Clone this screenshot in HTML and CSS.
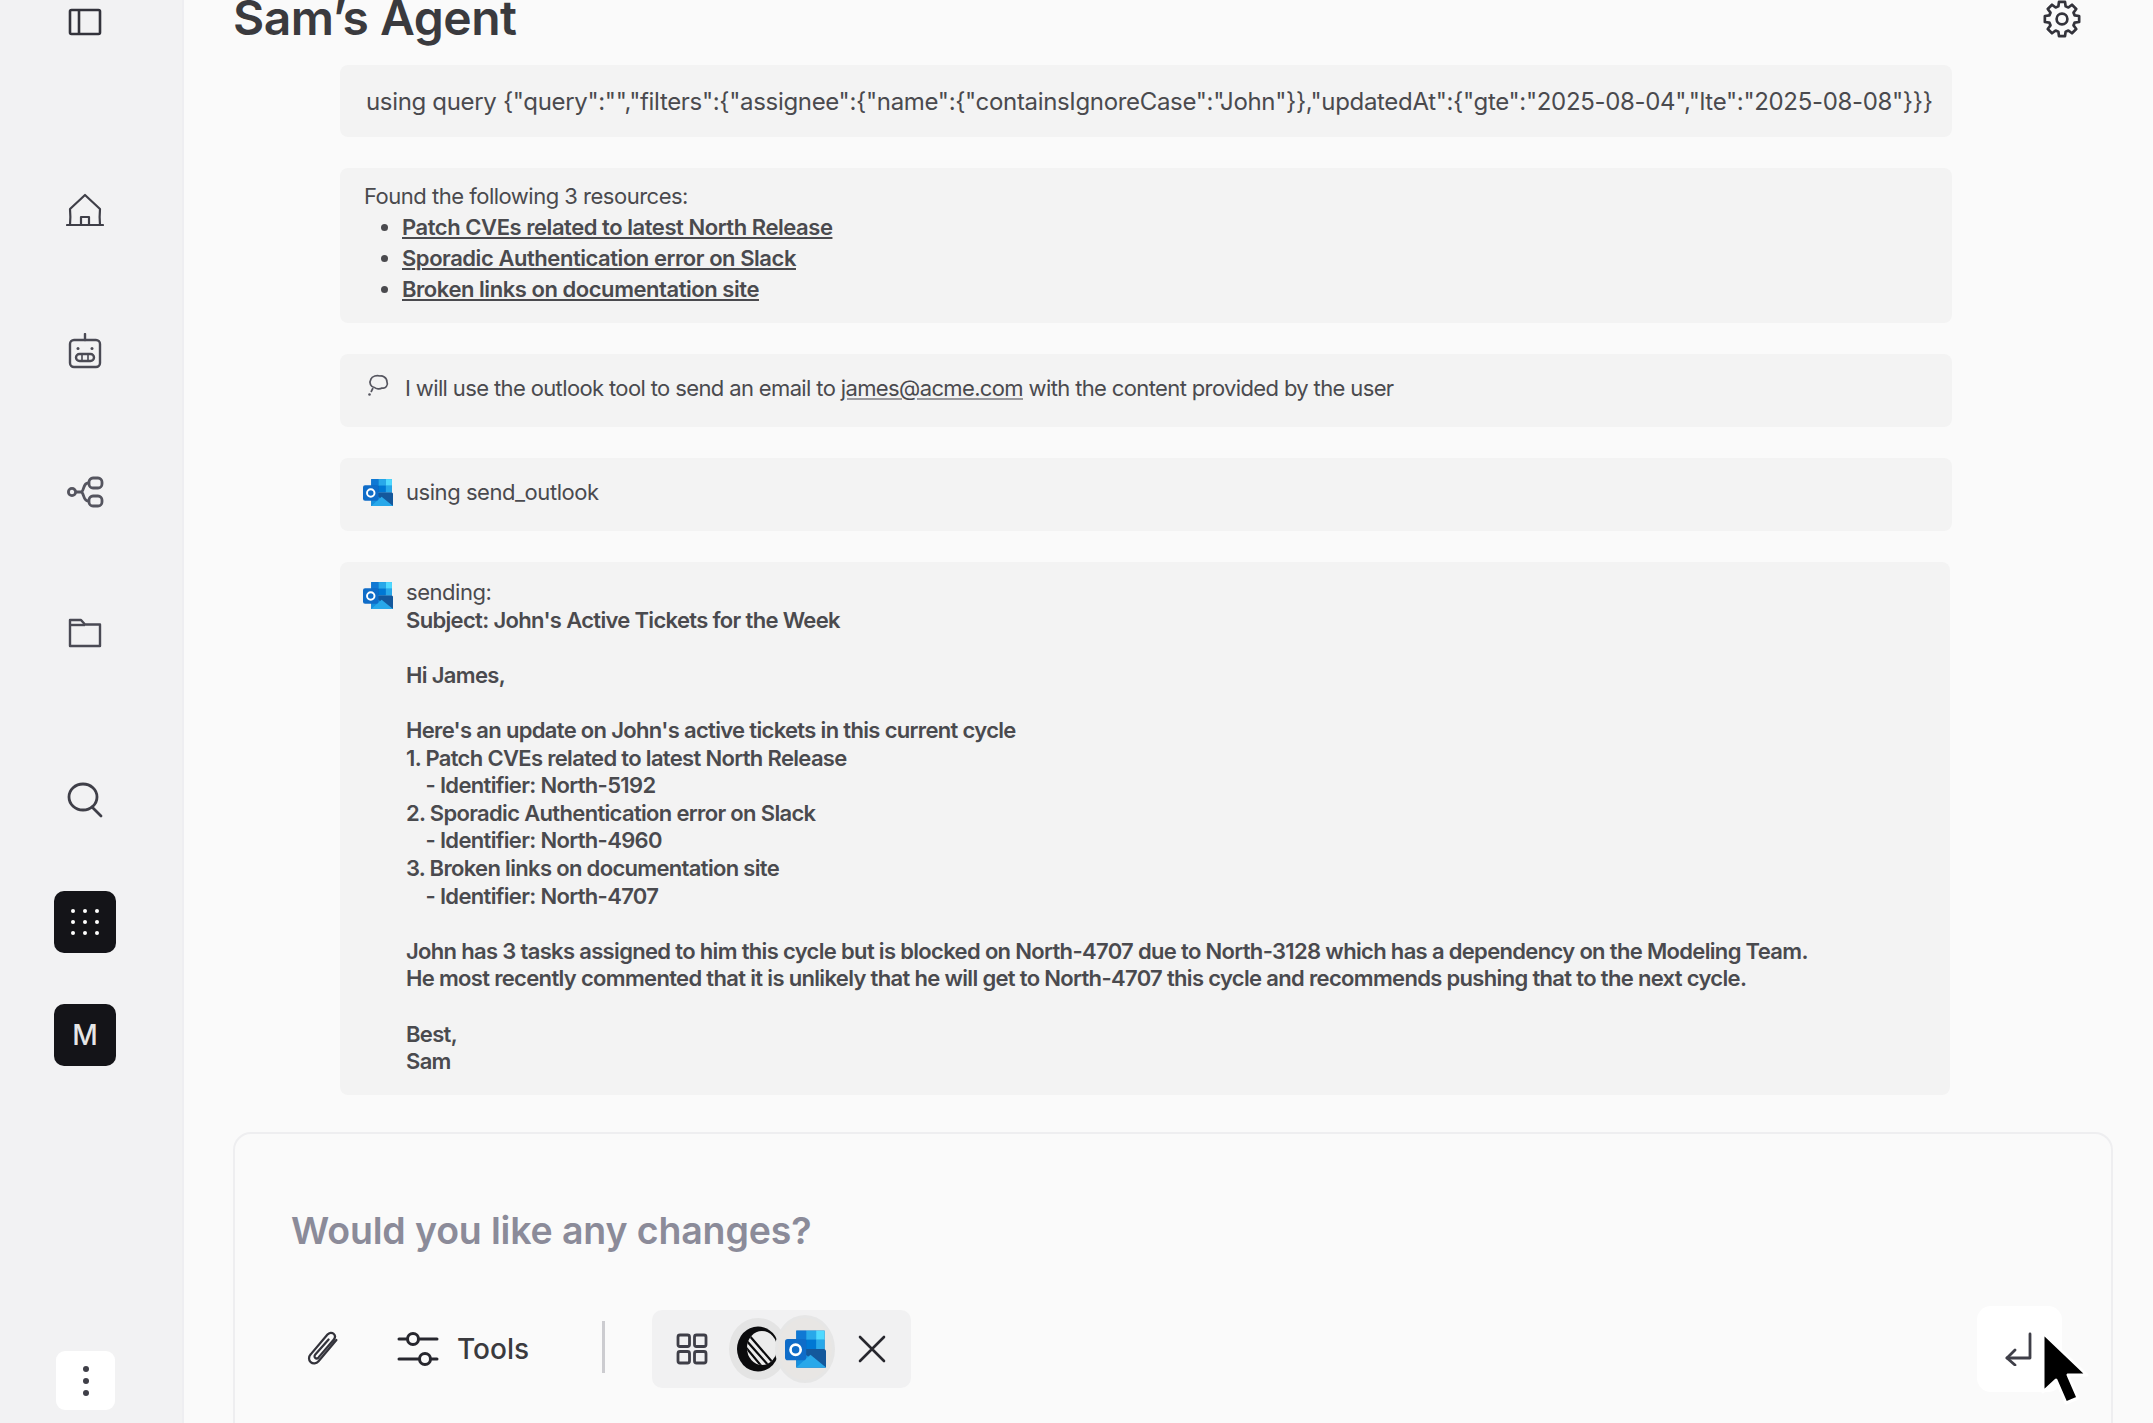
FILE: index.html
```html
<!DOCTYPE html>
<html>
  <head>
    <title>Sam's Agent</title>
    <meta name="viewport" content="width=device-width, initial-scale=1" />
    <link rel="stylesheet" href="styles.css">
  </head>

  <body>
    <svg class="sprites" width="0" height="0">
      <symbol id="outlook" viewBox="0 0 29 28">
        <path fill="#0364b8" d="M8 1h20v13H8z"/>
        <path fill="#0f78d4" d="M8 1h7v6.500H8z"/>
        <path fill="#28a8ea" d="M15 1h7v6.500h-7z"/>
        <path fill="#50d9ff" d="M22 1h6v6.500h-6z"/>
        <path fill="#0078d4" d="M15 7.500h7V14h-7z"/>
        <path fill="#28a8ea" d="M22 7.500h6V14h-6z"/>
        <path fill="#14589c" d="M8 14h20l1 1v12H8z"/>
        <path fill="#1490df" d="M8 14l21 13H8z"/>
        <path fill="#28a8ea" d="M8 27l10-9 11 9z"/>
        <rect fill="#0f6cc8" x="0" y="7" width="15" height="15" rx="2"/>
        <circle cx="7.500" cy="14.500" r="3.600" fill="none" stroke="#fff" stroke-width="1.900"/>
      </symbol>
    </svg>

    <div class="app">
      <aside class="sidebar">
        <a class="side-icon panel-toggle">
          <svg width="34" height="28" viewBox="0 0 34 28" fill="none" stroke="#33333b" stroke-width="2.600" stroke-linejoin="round"><rect x="2" y="2" width="30" height="24" rx="1.500"/><path d="M11 2v24"/></svg>
        </a>

        <nav class="side-nav">
          <a class="side-icon">
            <svg width="38" height="34" viewBox="0 0 38 34" fill="none" stroke="#3f3f48" stroke-width="2.200" stroke-linejoin="round" stroke-linecap="round"><path d="M1 32h36"/><path d="M4 32c.5-6 .5-11 0-16L19 2l15 14c-.5 5-.5 10 0 16"/><path d="M15 32v-8h8v8"/></svg>
          </a>
          <a class="side-icon">
            <svg width="34" height="36" viewBox="0 0 34 36" fill="none" stroke="#4a4a54" stroke-width="2.400" stroke-linecap="round"><path d="M17 1v6"/><rect x="2" y="7" width="30" height="27" rx="4"/><rect x="8" y="21" width="18" height="7" rx="3.500"/><path d="M14 21v7M20 21v7" stroke-width="1.600"/><circle cx="10" cy="15.500" r="1.500" fill="#4a4a54" stroke="none"/><circle cx="24" cy="15.500" r="1.500" fill="#4a4a54" stroke="none"/></svg>
          </a>
          <a class="side-icon">
            <svg width="37" height="32" viewBox="0 0 37 32" fill="none" stroke="#55555f" stroke-width="2.800"><circle cx="5" cy="16" r="3.600"/><path d="M9 16h5M14 16c3 0 2-9 7-9M14 16c3 0 2 9 7 9"/><rect x="22" y="2" width="13" height="10" rx="4"/><rect x="22" y="20" width="13" height="10" rx="4"/></svg>
          </a>
          <a class="side-icon">
            <svg width="34" height="30" viewBox="0 0 34 30" fill="none" stroke="#4a4a54" stroke-width="2.400" stroke-linejoin="round"><path d="M2 27V2h11l4 4.500h15V28H2z"/><path d="M2 7h15"/></svg>
          </a>
        </nav>

        <a class="side-icon search-link">
          <svg width="36" height="36" viewBox="0 0 36 36" fill="none" stroke="#3f3f48" stroke-width="2.800" stroke-linecap="round"><ellipse cx="16" cy="15" rx="14" ry="13"/><path d="M25 25l9 9"/></svg>
        </a>

        <a class="dark-btn apps-btn">
          <svg width="32" height="28" viewBox="0 0 32 28" fill="#fff"><circle cx="4" cy="3" r="2"/><circle cx="16" cy="3" r="2"/><circle cx="28" cy="3" r="2"/><circle cx="4" cy="14" r="2"/><circle cx="16" cy="14" r="2"/><circle cx="28" cy="14" r="2"/><circle cx="4" cy="25" r="2"/><circle cx="16" cy="25" r="2"/><circle cx="28" cy="25" r="2"/></svg>
        </a>
        <a class="dark-btn user-btn">M</a>

        <a class="more-btn">
          <svg width="8" height="32" viewBox="0 0 8 32" fill="#3f3f48"><circle cx="4" cy="4" r="3"/><circle cx="4" cy="16" r="3"/><circle cx="4" cy="28" r="3"/></svg>
        </a>
      </aside>

      <main class="main">
        <header class="topbar">
          <h1>Sam’s Agent</h1>
          <a class="settings">
            <svg width="38" height="38" viewBox="0 0 24 24" fill="none" stroke="#33333b" stroke-width="1.700" stroke-linejoin="round"><path d="M10.090 1.170h3.820l.38 2.850 1.730.72 2.290-1.750 2.700 2.700-1.750 2.290.72 1.730 2.850.38v3.820l-2.850.38-.72 1.730 1.750 2.290-2.700 2.700-2.290-1.750-1.730.72-.38 2.850h-3.820l-.38-2.850-1.730-.72-2.290 1.750-2.700-2.700 1.750-2.290-.72-1.730-2.850-.38v-3.820l2.850-.38.72-1.730-1.750-2.290 2.700-2.700 2.290 1.750 1.730-.72z"/><circle cx="12" cy="12" r="3.400"/></svg>
          </a>
        </header>

        <section class="log">
          <div class="card card-query">using query {"query":"","filters":{"assignee":{"name":{"containsIgnoreCase":"John"}},"updatedAt":{"gte":"2025-08-04","lte":"2025-08-08"}}}</div>

          <div class="card card-found">
            <span>Found the following 3 resources:</span>
            <ul>
              <li><a>Patch CVEs related to latest North Release</a></li>
              <li><a>Sporadic Authentication error on Slack</a></li>
              <li><a>Broken links on documentation site</a></li>
            </ul>
          </div>

          <div class="card card-row card-thought">
            <svg class="thought" width="24" height="24" viewBox="0 0 24 24" fill="none" stroke="#55555f" stroke-width="1.700" stroke-linejoin="round"><path d="M5 5c1-3 6-4 9-3 2-.5 7 1 7 6 1.500 3-1.500 7-5 6-2 1.500-6 1-7.500-.5C5 13 2.500 9 5 5z"/><circle cx="3.500" cy="20.500" r="1.300" fill="#55555f" stroke="none"/><path d="M5 18l2-4"/></svg>
            <span>I will use the outlook tool to send an email to <a>james@acme.com</a> with the content provided by the user</span>
          </div>

          <div class="card card-row">
            <svg class="logo-small" width="30" height="29"><use href="#outlook"/></svg>
            <span>using send_outlook</span>
          </div>

          <div class="card card-email">
            <svg class="logo-small" width="30" height="29"><use href="#outlook"/></svg>
            <div class="email-body">
              <div>sending:</div>
              <div class="email-text">Subject: John's Active Tickets for the Week

Hi James,

Here's an update on John's active tickets in this current cycle
1. Patch CVEs related to latest North Release
    - Identifier: North-5192
2. Sporadic Authentication error on Slack
    - Identifier: North-4960
3. Broken links on documentation site
    - Identifier: North-4707

John has 3 tasks assigned to him this cycle but is blocked on North-4707 due to North-3128 which has a dependency on the Modeling Team.
He most recently commented that it is unlikely that he will get to North-4707 this cycle and recommends pushing that to the next cycle.

Best,
Sam</div>
            </div>
          </div>
        </section>

        <section class="composer">
          <div class="placeholder">Would you like any changes?</div>
          <div class="toolbar">
            <svg class="attach" width="36" height="38" viewBox="0 0 32 34" fill="none" stroke="#33333b" stroke-width="2" stroke-linecap="round"><path d="M28 9 12 28c-2 2.300-5 2.600-7 .8s-2-4.800 0-7L20 4c1.600-1.800 4-2 5.500-.6s1.500 3.600 0 5.300L12 24.500c-.9 1-2.200 1.100-3 .4s-.8-2 .1-3L21 8.500"/></svg>

            <a class="tools-btn">
              <svg width="42" height="36" viewBox="0 0 42 36" fill="none" stroke="#27272e" stroke-width="3" stroke-linecap="round"><path d="M2 8h8M22 8h18M2 28h20M34 28h6"/><circle cx="16" cy="8" r="5.500"/><circle cx="28" cy="28" r="5.500"/></svg>
              <span>Tools</span>
            </a>

            <div class="divider"></div>

            <div class="chip">
              <svg width="32" height="32" viewBox="0 0 32 32" fill="none" stroke="#3f3f48" stroke-width="2.800"><rect x="2" y="2" width="11.500" height="11.500" rx="2"/><rect x="18.500" y="2" width="11.500" height="11.500" rx="2"/><rect x="2" y="18.500" width="11.500" height="11.500" rx="2"/><rect x="18.500" y="18.500" width="11.500" height="11.500" rx="2"/></svg>
              <div class="chip-logos">
                <span class="logo-circle">
                  <svg width="44" height="46" viewBox="0 0 44 46"><defs><clipPath id="linear-inner"><ellipse cx="26" cy="22" rx="15" ry="17"/></clipPath></defs><ellipse cx="22" cy="23" rx="21" ry="22.500" fill="#0b0b0d"/><ellipse cx="26" cy="22" rx="15" ry="17" fill="#ececec"/><g clip-path="url(#linear-inner)" stroke="#0b0b0d" stroke-width="2.200"><path d="M9 13l24 27M7 18l20 24M12 8l26 30"/></g></svg>
                </span>
                <span class="logo-circle logo-circle-2">
                  <svg width="41" height="40"><use href="#outlook"/></svg>
                </span>
              </div>
              <svg width="28" height="28" viewBox="0 0 28 28" fill="none" stroke="#27272e" stroke-width="2.600" stroke-linecap="round"><path d="M2 2l24 24M26 2 2 26"/></svg>
            </div>

            <a class="return-btn">
              <svg width="28" height="34" viewBox="0 0 28 34" fill="none" stroke="#3f3f48" stroke-width="2.800" stroke-linecap="round" stroke-linejoin="round"><path d="M26 2v24H3"/><path d="M11 18l-8 8 8 7"/></svg>
            </a>
          </div>
        </section>
      </main>

      <svg class="cursor" width="50" height="76" viewBox="0 0 50 76"><path d="M3 3v59l13-12 10 23 12-5-10-23h19z" fill="#000" stroke="#fff" stroke-width="3" stroke-linejoin="round"/></svg>
    </div>
  </body>
</html>
```

FILE: styles.css
```css
* {
  box-sizing: border-box;
}

html,
body {
  margin: 0;
  height: 100%;
  overflow: hidden;
}

body {
  font-family: Inter, "Liberation Sans", sans-serif;
  color: #4a4a4e;
  background: #fafafa;
}

.sprites {
  display: block;
  height: 0;
}

.app {
  position: relative;
  display: flex;
  height: 1423px;
  overflow: hidden;
}

/* sidebar */
.sidebar {
  flex: 0 0 184px;
  display: flex;
  flex-direction: column;
  padding-left: 54px;
  padding-bottom: 13px;
  background: #f2f2f3;
  border-right: 2px solid #eeeef1;
}

.side-icon {
  display: flex;
  align-items: center;
  justify-content: center;
  width: 62px;
  height: 40px;
}

.panel-toggle {
  margin-top: 2px;
}

.side-nav {
  display: flex;
  flex-direction: column;
  gap: 101px;
  margin-top: 148px;
}

.search-link {
  margin-top: 127px;
}

.dark-btn {
  display: flex;
  align-items: center;
  justify-content: center;
  width: 62px;
  height: 62px;
  border-radius: 10px;
  background: #141418;
  color: #e6e6e6;
  font-size: 28px;
  font-weight: 500;
}

.apps-btn {
  margin-top: 71px;
}

.user-btn {
  margin-top: 51px;
}

.more-btn {
  display: flex;
  align-items: center;
  justify-content: center;
  width: 59px;
  height: 59px;
  margin-top: auto;
  margin-left: 2px;
  border-radius: 9px;
  background: #fff;
}

/* main column */
.main {
  flex: 1;
  min-width: 0;
  padding: 0 40px 0 49px;
}

.topbar {
  display: flex;
  justify-content: space-between;
  height: 65px;
}

.topbar h1 {
  margin: 0;
  font-size: 48px;
  line-height: 36px;
  font-weight: 600;
  letter-spacing: -0.5px;
  color: #3a3a3e;
}

.settings {
  margin-right: 32px;
}

.log {
  display: flex;
  flex-direction: column;
  gap: 31px;
  padding: 0 161px 0 107px;
}

.card {
  border-radius: 8px;
  background: #f3f3f3;
  font-size: 22px;
  letter-spacing: -0.45px;
}

.card-query {
  height: 72px;
  padding: 0 20px 0 26px;
  font-size: 24px;
  line-height: 73px;
  white-space: nowrap;
  letter-spacing: -0.33px;
}

.card-found {
  height: 155px;
  padding: 13px 24px 0;
  line-height: 31px;
  letter-spacing: -0.5px;
}

.card-found ul {
  margin: 0;
  padding-left: 38px;
}

.card-found li a {
  font-weight: 600;
  letter-spacing: -0.45px;
  text-decoration: underline;
}

.card-row {
  display: flex;
  align-items: center;
  gap: 13px;
  height: 73px;
  padding: 0 23px 5px;
}

.card-thought {
  letter-spacing: -0.63px;
}

.card-row a {
  text-decoration: underline;
  text-decoration-color: #9a9a9e;
}

.thought {
  margin: -4px 2px 0 3px;
  flex: none;
}

.card-email {
  display: flex;
  gap: 13px;
  height: 533px;
  margin-right: 2px;
  padding: 17px 23px;
  line-height: 27.6px;
}

.logo-small {
  flex: none;
  margin-top: 2px;
}

.card-row .logo-small {
  margin-top: 0;
}

.email-text {
  font-weight: 600;
  letter-spacing: -0.67px;
  white-space: pre-wrap;
}

/* composer */
.composer {
  height: 340px;
  margin-top: 37px;
  padding: 77px 49px 0 56px;
  border: 2px solid #eeeef0;
  border-radius: 18px;
}

.placeholder {
  height: 40px;
  font-size: 37.5px;
  line-height: 40px;
  font-weight: 600;
  letter-spacing: -0.15px;
  color: #8b8b99;
}

.toolbar {
  display: flex;
  align-items: center;
  height: 86px;
  margin-top: 55px;
}

.attach {
  margin-left: 14px;
}

.tools-btn {
  display: flex;
  align-items: center;
  gap: 18px;
  margin-left: 56px;
  color: #3a3a3e;
  font-size: 28px;
  font-weight: 500;
}

.divider {
  width: 3px;
  height: 52px;
  margin-left: 73px;
  margin-top: -4px;
  background: #ccccd0;
}

.chip {
  display: flex;
  align-items: center;
  width: 259px;
  height: 78px;
  margin-left: 47px;
  padding: 0 25px 0 24px;
  border-radius: 10px;
  background: #f1f1f2;
}

.chip-logos {
  display: flex;
  margin-left: 21px;
  margin-right: 26px;
}

.logo-circle {
  display: flex;
  align-items: center;
  justify-content: center;
  width: 58px;
  height: 62px;
  border-radius: 50%;
  background: #e4e4e4;
}

.logo-circle-2 {
  position: relative;
  width: 54px;
  margin-left: -9px;
  background: #e8e6e4;
  box-shadow: 0 0 0 3px #e6e6e6;
}

.return-btn {
  display: flex;
  align-items: center;
  justify-content: center;
  width: 85px;
  height: 86px;
  margin-left: auto;
  border-radius: 14px;
  background: #fff;
  padding-right: 3px;
}

/* mouse pointer over the send button */
.cursor {
  position: absolute;
  left: 2040px;
  top: 1330px;
}
```
